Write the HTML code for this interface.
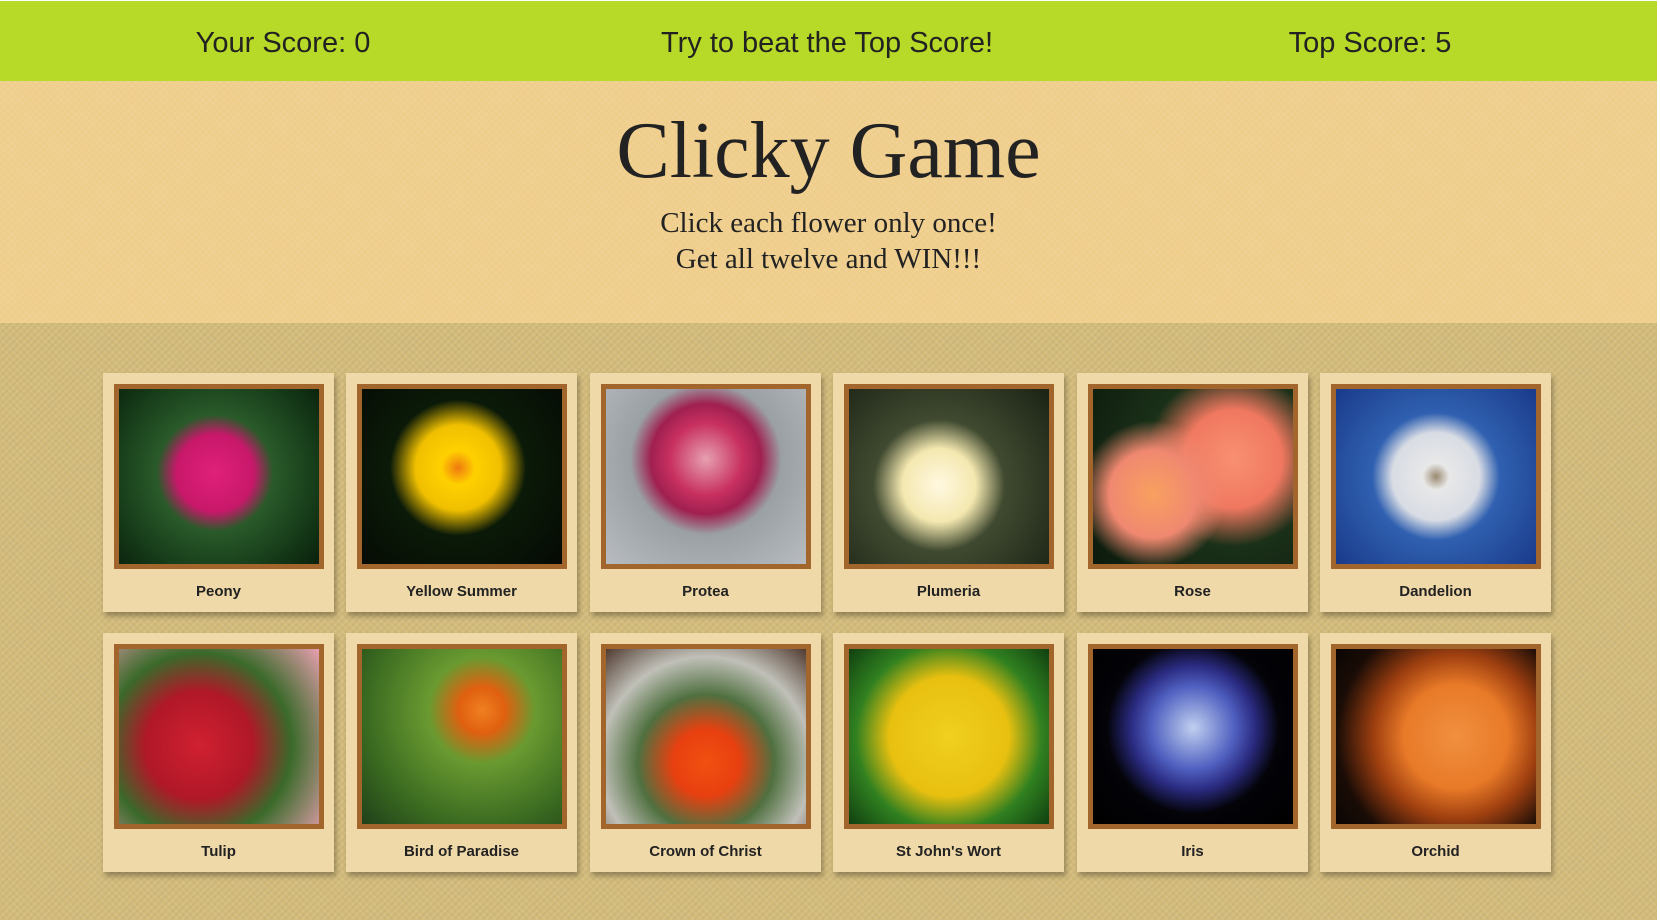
<!DOCTYPE html>
<html><head><meta charset="utf-8"><style>
*{margin:0;padding:0;box-sizing:border-box}
body{width:1660px;height:923px;background:#fff;position:relative;overflow:hidden;font-family:"Liberation Sans",sans-serif}
.top{position:absolute;left:0;top:1px;width:1657px;height:80px;background:#b7d927;color:#222}
.top div{position:absolute;top:26px;font-size:29px;white-space:nowrap;transform:translateX(-50%)}
.jumbo{position:absolute;left:0;top:81px;width:1657px;height:242px;background:#efcd8a;text-align:center;color:#222;font-family:"Liberation Serif",serif;
background-image:repeating-linear-gradient(45deg,rgba(255,255,255,.05) 0 2px,transparent 2px 5px),repeating-linear-gradient(-45deg,rgba(255,255,255,.05) 0 2px,transparent 2px 5px)}
.jumbo h1{font-weight:normal;font-size:80px;line-height:80px;position:absolute;left:0;right:0;top:30px}
.jumbo p{font-size:29px;line-height:36px;position:absolute;left:0;right:0;top:124px}
.main{position:absolute;left:0;top:323px;width:1657px;height:597px;background:#d3bb7b;
background-image:repeating-linear-gradient(45deg,rgba(255,255,255,.07) 0 2px,transparent 2px 5px),repeating-linear-gradient(-45deg,rgba(0,0,0,.04) 0 2px,transparent 2px 5px)}
.card{position:absolute;width:231px;height:239px;background:#f0d9a8;box-shadow:2px 4px 5px rgba(0,0,0,.3)}
.img{position:absolute;left:11px;top:11px;width:210px;height:185px;border:5px solid #a2652c}
.lbl{position:absolute;left:0;right:0;top:210px;text-align:center;font-weight:bold;font-size:15px;color:#222}
</style></head><body>
<div class="top">
<div style="left:283px">Your Score: 0</div>
<div style="left:827px">Try to beat the Top Score!</div>
<div style="left:1370px">Top Score: 5</div>
</div>
<div class="jumbo"><h1>Clicky Game</h1><p>Click each flower only once!<br>Get all twelve and WIN!!!</p></div>
<div class="main"></div>

<div class="card" style="left:103px;top:373px"><div class="img" style="background:radial-gradient(circle at 48% 48%,#e0207a 0,#c8186a 28%,#2a5a2a 42%,#153a18 75%,#0a200c 100%)"></div><div class="lbl">Peony</div></div>
<div class="card" style="left:346px;top:373px"><div class="img" style="background:radial-gradient(circle at 48% 45%,#f07a10 0,#ffd000 12%,#f0c000 30%,#0b1a08 48%,#050a04 100%)"></div><div class="lbl">Yellow Summer</div></div>
<div class="card" style="left:590px;top:373px"><div class="img" style="background:radial-gradient(circle at 50% 40%,#e6a0b0 0,#c83060 25%,#a02050 38%,#9aa0a4 52%,#b8bcc0 100%)"></div><div class="lbl">Protea</div></div>
<div class="card" style="left:833px;top:373px"><div class="img" style="background:radial-gradient(circle at 45% 55%,#fff8e0 0,#f4e8b0 25%,#404a30 45%,#1a2214 100%)"></div><div class="lbl">Plumeria</div></div>
<div class="card" style="left:1077px;top:373px"><div class="img" style="background:radial-gradient(circle at 30% 60%,#f8a060 0,#f08870 25%,transparent 42%),radial-gradient(circle at 70% 40%,#f89070 0,#f07860 28%,#1a3018 50%,#0c1a0c 100%)"></div><div class="lbl">Rose</div></div>
<div class="card" style="left:1320px;top:373px"><div class="img" style="background:radial-gradient(circle at 50% 50%,#9a8a70 0,#e8e8e8 10%,#d8dce4 33%,#3060b0 48%,#1a3a8a 100%)"></div><div class="lbl">Dandelion</div></div>

<div class="card" style="left:103px;top:633px"><div class="img" style="background:radial-gradient(circle at 40% 55%,#d02030 0,#b01828 35%,#3a6a2a 60%,#e8a0b0 100%)"></div><div class="lbl">Tulip</div></div>
<div class="card" style="left:346px;top:633px"><div class="img" style="background:radial-gradient(circle at 60% 35%,#f08020 0,#e06010 14%,#6a9a30 32%,#3a6a20 70%,#20401a 100%)"></div><div class="lbl">Bird of Paradise</div></div>
<div class="card" style="left:590px;top:633px"><div class="img" style="background:radial-gradient(circle at 50% 65%,#f05010 0,#e84010 22%,#507040 45%,#c0c0b8 70%,#503a30 100%)"></div><div class="lbl">Crown of Christ</div></div>
<div class="card" style="left:833px;top:633px"><div class="img" style="background:radial-gradient(circle at 50% 50%,#f0d020 0,#e8c010 45%,#308020 70%,#104010 100%)"></div><div class="lbl">St John's Wort</div></div>
<div class="card" style="left:1077px;top:633px"><div class="img" style="background:radial-gradient(circle at 50% 45%,#c0d0f0 0,#5060c0 30%,#2a2a80 45%,#030308 62%,#000 100%)"></div><div class="lbl">Iris</div></div>
<div class="card" style="left:1320px;top:633px"><div class="img" style="background:radial-gradient(circle at 60% 50%,#f09040 0,#e87a28 35%,#a04010 55%,#1a0c06 80%,#0a0503 100%)"></div><div class="lbl">Orchid</div></div>
</body></html>
